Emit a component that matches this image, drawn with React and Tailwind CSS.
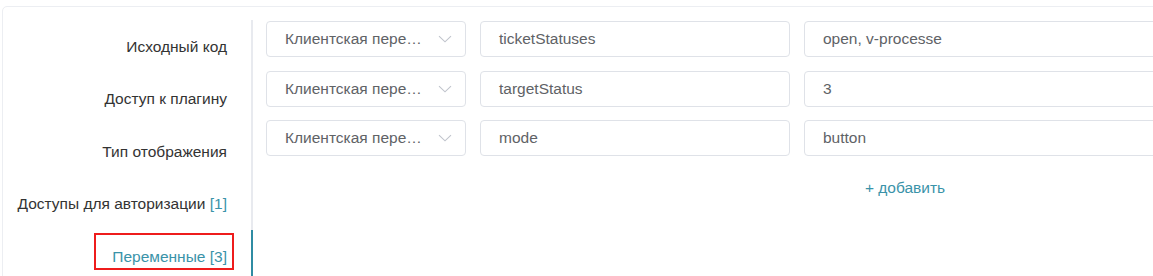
import React from "react";

const tabs = [
  { label: "Исходный код" },
  { label: "Доступ к плагину" },
  { label: "Тип отображения" },
  { label: "Доступы для авторизации", count: 1 },
  { label: "Переменные", count: 3, active: true },
];

const rows = [
  { name: "ticketStatuses", value: "open, v-processe" },
  { name: "targetStatus", value: "3" },
  { name: "mode", value: "button" },
];

const Chevron = () => (
  <svg width="14" height="8" viewBox="0 0 14 8" fill="none" className="shrink-0">
    <path d="M1 1.2 L7 6.8 L13 1.2" stroke="#c0c4cc" strokeWidth="1.1" />
  </svg>
);

export default function App() {
  return (
    <div
      className="w-full h-[276px] bg-white overflow-hidden text-[15.5px]"
      style={{ fontFamily: '"Liberation Sans", Arial, sans-serif' }}
    >
      <div className="mt-[6px] ml-[2px] w-[1600px] h-[300px] border border-[#eceef2] rounded-tl-[5px] flex pt-[13px]">
        <div className="w-[250px] shrink-0 flex flex-col border-r-2 border-[#e8eaef]">
          {tabs.map((t) => (
            <div
              key={t.label}
              className={`relative h-[52.5px] shrink-0 flex items-center justify-end pr-[24px] ${
                t.active ? "text-[#3a93a9]" : "text-[#333]"
              }`}
            >
              <span>
                {t.label}
                {t.count !== undefined && <span className="text-[#3a93a9]"> [{t.count}]</span>}
              </span>
              {t.active && (
                <>
                  <div className="absolute right-[-2px] top-0 bottom-0 w-[2px] bg-[#2f8ca3]" />
                  <div className="absolute left-[91px] top-[2.5px] w-[140px] h-[37px] border-2 border-[#ee1c1c]" />
                </>
              )}
            </div>
          ))}
        </div>

        <div className="pl-[13px] pt-[1px] w-[1291px]">
          <div className="flex flex-col gap-[13.5px]">
            {rows.map((r) => (
              <div key={r.name} className="flex gap-[14px] text-[#606266]">
                <div className="w-[200px] h-[36px] shrink-0 border border-[#dfe2e8] rounded-[4px] flex items-center pl-[18px] pr-[13px]">
                  <span className="truncate w-[141px]">Клиентская переменная</span>
                  <span className="ml-auto">
                    <Chevron />
                  </span>
                </div>
                <div className="w-[310px] h-[36px] shrink-0 border border-[#dfe2e8] rounded-[4px] flex items-center pl-[18px]">
                  {r.name}
                </div>
                <div className="w-[740px] h-[36px] shrink-0 border border-[#dfe2e8] rounded-[4px] flex items-center pl-[18px]">
                  {r.value}
                </div>
              </div>
            ))}
          </div>
          <div className="w-[1278px] flex justify-center mt-[20px] text-[#3a93a9]">+ добавить</div>
        </div>
      </div>
    </div>
  );
}
